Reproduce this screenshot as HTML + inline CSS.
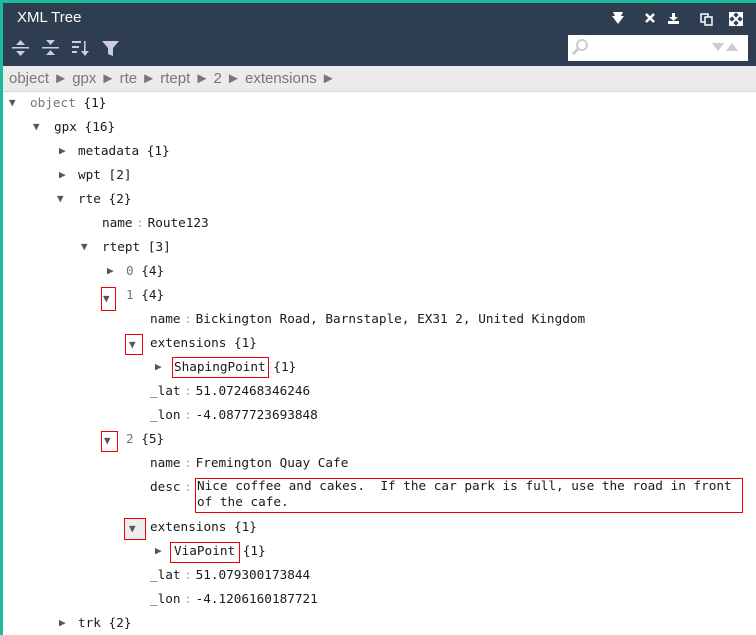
<!DOCTYPE html>
<html><head><meta charset="utf-8"><style>
*{margin:0;padding:0;box-sizing:border-box}
body{width:756px;height:635px;overflow:hidden;background:#fff;font-family:"DejaVu Sans Mono",monospace;font-size:12.7px;color:#1a1a1a;position:relative}
.gl{position:absolute;left:0;top:0;width:3px;height:635px;background:#1abc9c}
.gt{position:absolute;left:0;top:0;width:756px;height:3px;background:#1abc9c}
.hdr{position:absolute;left:3px;top:3px;width:753px;height:63px;background:#2e3d50}
.title{position:absolute;left:14px;top:6px;color:#fff;font:15px "Liberation Sans",sans-serif}
.bc{position:absolute;left:3px;top:66px;width:753px;height:26px;background:#ebebeb;border-bottom:1px solid #d8d8d8;color:#777;font:15px "Liberation Sans",sans-serif;padding:4px 0 0 6px}
.search{position:absolute;left:568px;top:35px;width:180px;height:26px;background:#fff}
.r{position:absolute;white-space:pre;line-height:20px}
.t{position:absolute;font-size:11px;color:#555;line-height:20px}
.g{color:#777}
.box{position:absolute;border:1px solid #e00}
.sep{color:#aaa;display:inline-block;width:15px;text-align:center}
</style></head><body>
<div class="gt"></div><div class="gl"></div>
<div class="hdr">
<div class="title">XML Tree</div>
<svg style="position:absolute;left:0;top:0" width="753" height="63">
<g fill="#ccd" stroke="none">
<rect x="9" y="44" width="17" height="1.5"/><polygon points="17.5,37 13,42 22,42"/><polygon points="17.5,53 13,48 22,48"/>
<rect x="39" y="44" width="17" height="1.5"/><polygon points="47.5,42 43,37 52,37"/><polygon points="47.5,47 43,52 52,52"/>
<rect x="69" y="38" width="9" height="2"/><rect x="69" y="43" width="7" height="2"/><rect x="69" y="48" width="5" height="2"/><rect x="81" y="38" width="1.6" height="11"/><polygon points="82,53 78,48 86,48"/>
<polygon points="99,38 116,38 110,45 110,53 105,51 105,45"/>
</g>
<g fill="#fff">
<polygon points="610,9 620,9 618,13 621,13 615,21 609,13 612,13"/>
<path d="M643 11l8 8M651 11l-8 8" stroke="#fff" stroke-width="2.5"/>
<rect x="669" y="10" width="3" height="5"/><polygon points="666,14 675,14 670.5,18"/><rect x="665" y="18" width="11" height="3"/>
<rect x="698" y="11" width="7" height="8" fill="none" stroke="#fff" stroke-width="1.5"/><rect x="702" y="14" width="7" height="8" fill="#2e3d50" stroke="#fff" stroke-width="1.5"/>
<path d="M727 10l4 0-4 4zM739 10l-4 0 4 4zM727 22l4 0-4-4zM739 22l-4 0 4-4zM728 11l10 10M738 11l-10 10" stroke="#fff" stroke-width="2"/>
</g>
</svg>
</div>
<div class="search"><svg width="180" height="26"><circle cx="14" cy="10" r="5" fill="none" stroke="#ccc" stroke-width="2"/><path d="M10 14l-5 5" stroke="#ccc" stroke-width="3"/><polygon points="144,8 156,8 150,16" fill="#ccc"/><polygon points="158,16 170,16 164,8" fill="#ccc"/></svg></div>
<div class="bc">object ► gpx ► rte ► rtept ► 2 ► extensions ►</div>

<div class="t" style="left:9px;top:93px">▼</div><div class="r" style="left:30px;top:93px"><span class="g">object</span> {1}</div>
<div class="t" style="left:33px;top:117px">▼</div><div class="r" style="left:54px;top:117px">gpx {16}</div>
<div class="t" style="left:59px;top:141px">▶</div><div class="r" style="left:78px;top:141px">metadata {1}</div>
<div class="t" style="left:59px;top:165px">▶</div><div class="r" style="left:78px;top:165px">wpt [2]</div>
<div class="t" style="left:57px;top:189px">▼</div><div class="r" style="left:78px;top:189px">rte {2}</div>
<div class="r" style="left:102px;top:213px">name<span class="sep">:</span>Route123</div>
<div class="t" style="left:81px;top:237px">▼</div><div class="r" style="left:102px;top:237px">rtept [3]</div>
<div class="t" style="left:107px;top:261px">▶</div><div class="r" style="left:126px;top:261px"><span class="g">0</span> {4}</div>
<div class="box" style="left:101px;top:287px;width:15px;height:24px"></div>
<div class="t" style="left:103px;top:289px">▼</div><div class="r" style="left:126px;top:285px"><span class="g">1</span> {4}</div>
<div class="r" style="left:150px;top:309px">name<span class="sep">:</span>Bickington Road, Barnstaple, EX31 2, United Kingdom</div>
<div class="box" style="left:125px;top:334px;width:18px;height:21px"></div>
<div class="t" style="left:129px;top:335px">▼</div><div class="r" style="left:150px;top:333px">extensions {1}</div>
<div class="t" style="left:155px;top:357px">▶</div><div class="box" style="left:172px;top:357px;width:97px;height:21px"></div><div class="r" style="left:174px;top:357px">ShapingPoint {1}</div>
<div class="r" style="left:150px;top:381px">_lat<span class="sep">:</span>51.072468346246</div>
<div class="r" style="left:150px;top:405px">_lon<span class="sep">:</span>-4.0877723693848</div>
<div class="box" style="left:101px;top:431px;width:17px;height:21px"></div>
<div class="t" style="left:104px;top:431px">▼</div><div class="r" style="left:126px;top:429px"><span class="g">2</span> {5}</div>
<div class="r" style="left:150px;top:453px">name<span class="sep">:</span>Fremington Quay Cafe</div>
<div class="r" style="left:150px;top:477px">desc<span class="sep">:</span></div>
<div class="box" style="left:195px;top:478px;width:548px;height:35px"></div>
<div class="r" style="left:197px;top:478px;line-height:16px">Nice coffee and cakes.  If the car park is full, use the road in front
of the cafe.</div>
<div class="box" style="left:124px;top:518px;width:22px;height:22px;background:#eee"></div>
<div class="t" style="left:129px;top:519px">▼</div><div class="r" style="left:150px;top:517px">extensions {1}</div>
<div class="t" style="left:155px;top:541px">▶</div><div class="box" style="left:170px;top:542px;width:70px;height:21px"></div><div class="r" style="left:174px;top:541px">ViaPoint {1}</div>
<div class="r" style="left:150px;top:565px">_lat<span class="sep">:</span>51.079300173844</div>
<div class="r" style="left:150px;top:589px">_lon<span class="sep">:</span>-4.1206160187721</div>
<div class="t" style="left:59px;top:613px">▶</div><div class="r" style="left:78px;top:613px">trk {2}</div>
</body></html>
